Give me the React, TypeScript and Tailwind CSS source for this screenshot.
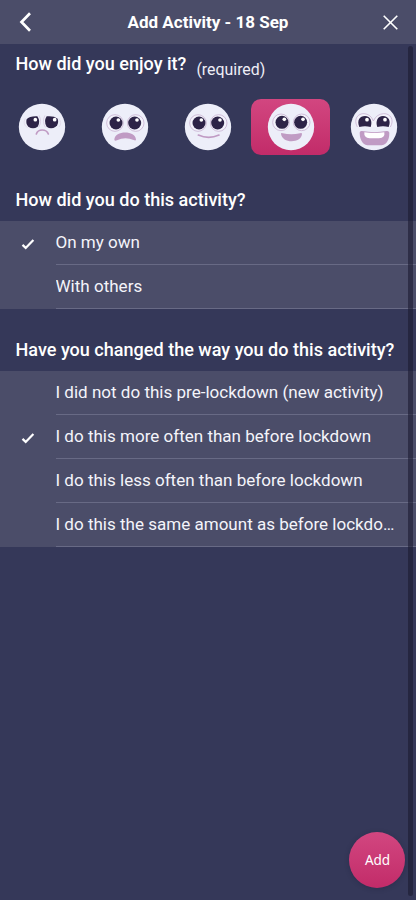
import React from "react";

const INK = "#2d2347";
const MAUVE = "#c09bc4";

type Mood = "sad" | "unhappy" | "neutral" | "happy" | "joyful";

const moods: Mood[] = ["sad", "unhappy", "neutral", "happy", "joyful"];

function RoundEyes({ y = 58 }: { y?: number }) {
  return (
    <g>
      {[
        [40, 43],
        [102, 99],
      ].map(([ring, pupil]) => (
        <g key={ring}>
          <circle cx={ring} cy={y} r="25" fill="#f3f2fb" stroke="#c9b3d3" strokeWidth="2.5" />
          <circle cx={pupil} cy={y} r="19.5" fill={INK} />
          <circle cx={pupil + 7} cy={y - 9} r="5.5" fill="#fff" />
        </g>
      ))}
    </g>
  );
}

function Face({ mood }: { mood: Mood }) {
  return (
    <svg viewBox="-2 -2 144 144" className="h-12 w-12 shrink-0">
      <circle cx="70" cy="70" r="69.5" fill="#edeef9" />
      {mood === "sad" && (
        <g>
          <path d="M20 44Q10 63 27 72M120 44Q132 58 121 70" fill="none" stroke="#ddd4e6" strokeWidth="2" />
          <path d="M24 47Q32 37 56 38Q67 54 57 69Q43 78 29 69Q20 60 24 47Z" fill={INK} />
          <path d="M84 38Q106 36 117 45Q122 60 111 69Q97 78 84 69Q74 54 84 38Z" fill={INK} />
          <path d="M61 35Q71 53 60 71M79 35Q69 53 80 71" fill="none" stroke="#d5c2dc" strokeWidth="2" />
          <circle cx="50" cy="48" r="5.5" fill="#fff" />
          <circle cx="108" cy="48" r="5.5" fill="#fff" />
          <path d="M53 91C58 75 83 75 89 91" fill="none" stroke={MAUVE} strokeWidth="5" strokeLinecap="round" />
        </g>
      )}
      {mood === "unhappy" && (
        <g>
          <RoundEyes />
          <path d="M38 108C39 79 102 79 103 108Q102 112 96 109Q70 98 46 110Q39 113 38 108Z" fill={MAUVE} />
        </g>
      )}
      {mood === "neutral" && (
        <g>
          <RoundEyes />
          <path d="M41 94Q72 108 103 94" fill="none" stroke={MAUVE} strokeWidth="5" strokeLinecap="round" />
        </g>
      )}
      {mood === "happy" && (
        <g>
          <RoundEyes y={56} />
          <path d="M40 90Q40 87 45 89Q71 95 97 89Q103 87 103 91C100 120 43 120 40 90Z" fill={MAUVE} />
        </g>
      )}
      {mood === "joyful" && (
        <g>
          <path d="M20 70C7 45 23 29 40 30Q60 31 68 52Q78 31 99 30C119 29 132 49 119 70" fill="#f3f2fb" stroke="#c9b3d3" strokeWidth="2.5" />
          <path d="M26 70C18 50 27 37 43 37C60 37 66 54 60 70Q43 66 26 70Z" fill={INK} />
          <path d="M80 70C74 54 80 37 97 37C114 37 122 52 114 70Q97 66 80 70Z" fill={INK} />
          <circle cx="49" cy="48" r="5.5" fill="#fff" />
          <circle cx="103" cy="48" r="5.5" fill="#fff" />
          <path d="M27 87Q27 81 34 82Q71 89 108 82Q115 81 116 87Q116 125 86 125H57Q28 125 27 87Z" fill={MAUVE} />
          <path d="M41 86Q71 90 101 86Q104 103 85 104H57Q39 103 41 86Z" fill="#fff" />
        </g>
      )}
    </svg>
  );
}

function Heading({ children }: { children: React.ReactNode }) {
  return <h2 className="whitespace-nowrap text-[18.06px] leading-6 font-medium text-white">{children}</h2>;
}

function Options({ items, selected }: { items: string[]; selected: number }) {
  return (
    <div className="bg-[#4b4d69]">
      {items.map((item, i) => (
        <div key={item} className="flex h-11">
          <div className="flex w-[55.5px] shrink-0 items-center pt-px pl-[21px]">
            {i === selected && (
              <svg viewBox="0 0 14 12" className="h-3 w-3.5">
                <path d="M1.5 6.9L4.7 9.9L12.4 2" fill="none" stroke="#fff" strokeWidth="2.2" />
              </svg>
            )}
          </div>
          <div className="min-w-0 grow border-b border-[#686a85] pr-[20px]">
            <div className="truncate text-[17.04px] leading-[42px] text-[#f4f4fa]">{item}</div>
          </div>
        </div>
      ))}
    </div>
  );
}

export default function App() {
  return (
    <div className="relative h-[900px] w-[416px] overflow-hidden bg-[#353859] font-['Roboto',sans-serif] text-white">
      <header className="flex h-11 items-center justify-between bg-[#4b4d69] pr-[17px] pl-[19px]">
        <svg viewBox="0 0 13 20" className="h-5 w-[13px]">
          <path d="M11 1.3L2.5 10L11 18.7" fill="none" stroke="#fff" strokeWidth="2.7" />
        </svg>
        <h1 className="pl-[2px] text-[17px] leading-6 font-bold">Add Activity - 18 Sep</h1>
        <svg viewBox="0 0 17 17" className="h-[17px] w-[17px]">
          <path d="M1.7 1.7L15.3 15.3M15.3 1.7L1.7 15.3" stroke="#fff" strokeWidth="1.6" />
        </svg>
      </header>

      <main>
        <div className="flex h-[55px] gap-[10px] pt-2 pl-[15.5px]">
          <Heading>How did you enjoy it?</Heading>
          <span className="pt-[6px] text-[15.9px] leading-6 text-[#eeeef6]">(required)</span>
        </div>
        <div className="grid h-14 grid-cols-5">
          {moods.map((mood) => (
            <button
              key={mood}
              aria-label={mood}
              className={
                mood === "happy"
                  ? "mr-[2.5px] ml-[1.5px] flex items-center justify-center rounded-[10px] bg-linear-to-b from-[#d24680] to-[#c22b69]"
                  : "mx-0.5 flex items-center justify-center rounded-[10px]"
              }
            >
              <Face mood={mood} />
            </button>
          ))}
        </div>
        <section className="pt-[33px]">
          <div className="h-[33px] pl-[15.5px]">
            <Heading>How did you do this activity?</Heading>
          </div>
          <Options items={["On my own", "With others"]} selected={0} />
        </section>
        <section className="pt-[29px]">
          <div className="h-[33px] pl-[15.5px]">
            <Heading>Have you changed the way you do this activity?</Heading>
          </div>
          <Options
            items={[
              "I did not do this pre-lockdown (new activity)",
              "I do this more often than before lockdown",
              "I do this less often than before lockdown",
              "I do this the same amount as before lockdown",
            ]}
            selected={1}
          />
        </section>
      </main>

      <div className="absolute top-[46px] right-[3px] h-[850px] w-[5px] rounded-full bg-[#1a1a30]/60" />
      <button className="absolute top-[832px] left-[349px] h-14 w-14 rounded-full bg-linear-to-b from-[#d24680] to-[#c22b69] pl-px font-['Noto_Sans',sans-serif] text-[13.5px] shadow-[0_1px_5px_rgba(20,20,45,0.25)]">
        Add
      </button>
    </div>
  );
}
